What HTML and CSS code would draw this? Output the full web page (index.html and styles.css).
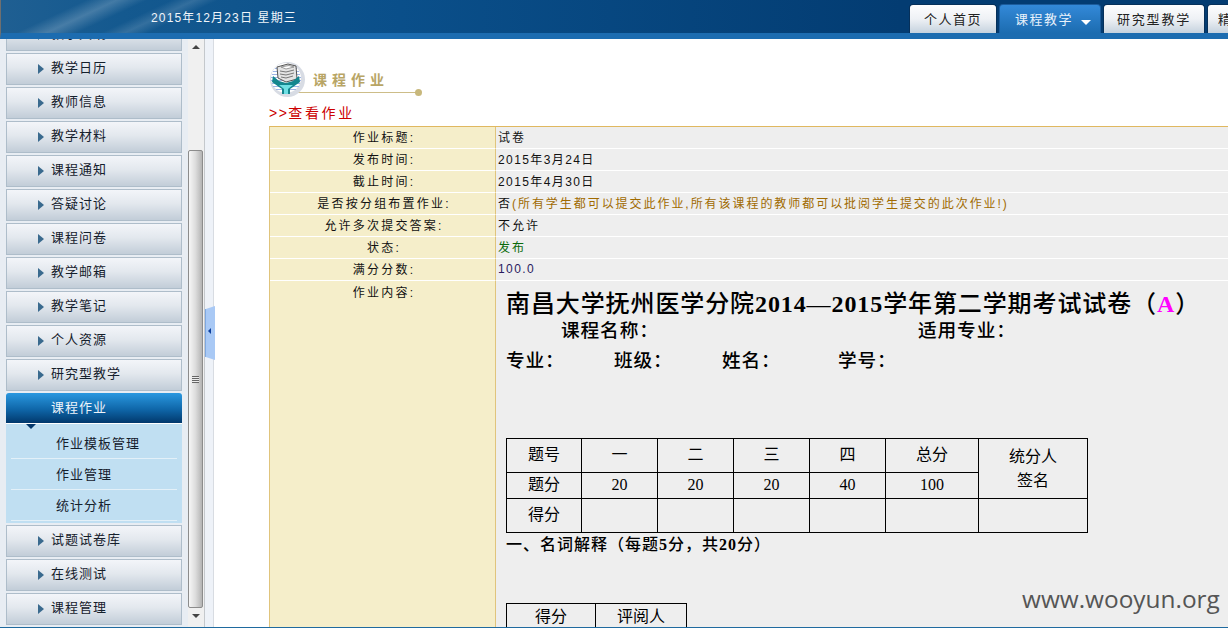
FILE: index.html
```html
<!DOCTYPE html>
<html lang="zh-CN">
<head>
  <meta charset="UTF-8">
  <title>课程作业</title>
  <link rel="stylesheet" href="styles.css">
</head>
<body>

  <!-- 顶部 -->
  <div class="top-bar">
    <div class="top-date">2015年12月23日 星期三</div>
    <div class="top-tabs">
      <div class="tab">个人首页</div>
      <div class="tab tab-active">课程教学<span class="tab-caret"></span></div>
      <div class="tab tab-wide">研究型教学</div>
      <div class="tab tab-cut">精品课程</div>
    </div>
  </div>

  <div class="page">
    <!-- 左侧菜单 -->
    <div class="side">
      <div class="menu">
        <div class="menu-item">教学大纲</div>
        <div class="menu-item">教学日历</div>
        <div class="menu-item">教师信息</div>
        <div class="menu-item">教学材料</div>
        <div class="menu-item">课程通知</div>
        <div class="menu-item">答疑讨论</div>
        <div class="menu-item">课程问卷</div>
        <div class="menu-item">教学邮箱</div>
        <div class="menu-item">教学笔记</div>
        <div class="menu-item">个人资源</div>
        <div class="menu-item">研究型教学</div>
        <div class="menu-item menu-active">课程作业</div>
        <div class="submenu">
          <div class="submenu-item">作业模板管理</div>
          <div class="submenu-item">作业管理</div>
          <div class="submenu-item">统计分析</div>
        </div>
        <div class="menu-item">试题试卷库</div>
        <div class="menu-item">在线测试</div>
        <div class="menu-item">课程管理</div>
      </div>
    </div>

    <div class="scrollbar">
      <span class="arrow-up"></span>
      <div class="thumb-track">
        <div class="thumb"><span class="grip"></span></div>
      </div>
      <span class="arrow-down"></span>
    </div>

    <div class="collapse-strip">
      <div class="collapse-handle"><span class="collapse-arrow"></span></div>
    </div>

    <!-- 内容 -->
    <div class="main">
      <div class="page-title">
        <svg class="title-icon" width="36" height="36" viewBox="0 0 36 36">
          <circle cx="17.5" cy="17.5" r="17.5" fill="#d8dce4"/>
          <circle cx="16" cy="16" r="15" fill="#fff"/>
          <g stroke="#9db4e6" stroke-width="1">
            <path d="M5 6.5h22M3 9.5h26M2 12.5h28M1 15.5h30M1 18.5h30M2 21.5h28M3 24.5h26M6 27.5h20"/>
          </g>
          <path d="M7 5l11-3 8 2 1 13-11 3-8-4z" fill="#e4e4e4" stroke="#555" stroke-width="1"/>
          <path d="M11 5l8-1.500 5 1.500-8 2z" fill="#fff" stroke="#777" stroke-width="0.700"/>
          <path d="M10 9l6 1 8-2M10 12l6 1 8-2M11 15l5 1 7-2" stroke="#777" stroke-width="1" fill="none"/>
          <path d="M3 14l6 5 7 2 7-2 6-5 1 6-7 5-3 2v5h-8v-5l-3-2-7-5z" fill="#14868e"/>
          <path d="M9 23h14l-5 4v5h-4v-5z" fill="#6fe0e4"/>
        </svg>
        <div class="title-text">课程作业</div>
        <span class="title-dot"></span>
      </div>
      <div class="sub-title"><span class="sub-mark">&gt;&gt;</span>查看作业</div>

      <table class="detail">
        <tr><th>作业标题:</th><td>试卷</td></tr>
        <tr><th>发布时间:</th><td class="num">2015年3月24日</td></tr>
        <tr><th>截止时间:</th><td class="num">2015年4月30日</td></tr>
        <tr><th>是否按分组布置作业:</th><td>否<span class="note">(所有学生都可以提交此作业,所有该课程的教师都可以批阅学生提交的此次作业!)</span></td></tr>
        <tr><th>允许多次提交答案:</th><td>不允许</td></tr>
        <tr><th>状态:</th><td class="status">发布</td></tr>
        <tr><th>满分分数:</th><td class="num score">100.0</td></tr>
        <tr>
          <th class="content-label">作业内容:</th>
          <td class="content-cell">
            <div class="exam-title">南昌大学抚州医学分院<b>2014</b>—<b>2015</b>学年第二学期考试试卷（<b class="exam-a">A</b>）</div>
            <div class="exam-line exam-line1">
              <span class="course-name">课程名称：</span>
              <span>适用专业：</span>
            </div>
            <div class="exam-line exam-line2">
              <span class="f-major">专业：</span>
              <span class="f-class">班级：</span>
              <span class="f-name">姓名：</span>
              <span>学号：</span>
            </div>

            <table class="score-table">
              <tr class="row-a">
                <td class="c1">题号</td><td class="c2">一</td><td class="c2">二</td><td class="c2">三</td><td class="c2">四</td><td class="c3">总分</td>
                <td class="c4" rowspan="2">统分人<br>签名</td>
              </tr>
              <tr class="row-b">
                <td>题分</td><td>20</td><td>20</td><td>20</td><td>40</td><td>100</td>
              </tr>
              <tr class="row-a">
                <td>得分</td><td></td><td></td><td></td><td></td><td></td><td></td>
              </tr>
            </table>

            <div class="section-title">一、名词解释（每题<b>5</b>分，共<b>20</b>分）</div>

            <table class="mark-table">
              <tr><td class="m1">得分</td><td class="m2">评阅人</td></tr>
            </table>
          </td>
        </tr>
      </table>
    </div>
  </div>

  <div class="bottom-line"></div>
  <div class="watermark">www.wooyun.org</div>

</body>
</html>
```

FILE: styles.css
```css
html, body {
  margin: 0;
  padding: 0;
  height: 100%;
  overflow: hidden;
}

body {
  font-family: "Liberation Sans", "Noto Sans CJK SC", sans-serif;
  font-size: 12px;
  color: #111;
  background-color: #fff;
}

/* 顶部 */
.top-bar {
  height: 33px;
  border-bottom: 6px solid #1c6cb0;
  border-left: 1px solid #6f6f6f;
  display: flex;
  justify-content: space-between;
  background:
    linear-gradient(155deg, transparent 36px, rgba(255, 255, 255, 0.2) 49px, transparent 62px, transparent 72px, rgba(255, 255, 255, 0.14) 82px, transparent 92px),
    linear-gradient(90deg, #1f5f92 0, #14598f 120px, #0a4f8a 400px, #033c72 900px);
}

.top-date {
  margin-left: 150px;
  line-height: 37px;
  font-size: 12px;
  letter-spacing: 1.15px;
  color: #f0f5fa;
}

.top-tabs {
  display: flex;
  gap: 2px;
  padding-top: 4px;
  width: 319px;
  overflow: hidden;
}

.tab {
  flex: none;
  width: 86px;
  height: 28px;
  line-height: 30px;
  text-align: center;
  font-size: 13px;
  letter-spacing: 1.5px;
  color: #222;
  background: linear-gradient(#fdfdfe, #eef1f5 50%, #c5d2de);
  border: 1px solid #06305a;
  border-bottom: none;
  border-radius: 4px 4px 0 0;
}

.tab-active {
  width: 94px;
  padding-left: 6px;
  color: #e8f2fb;
  background: linear-gradient(#3389d8, #1c6cb0);
  border-color: #1c5c9c;
}

.tab-wide {
  width: 100px;
  letter-spacing: 1.8px;
}

.tab-cut {
  width: 60px;
  text-align: left;
  padding-left: 10px;
}

.tab-caret {
  display: inline-block;
  margin-left: 8px;
  border-left: 5px solid transparent;
  border-right: 5px solid transparent;
  border-top: 5px solid #fff;
  vertical-align: -1px;
}

/* 页面 */
.page {
  display: flex;
  height: 588px;
  overflow: hidden;
}

.side {
  flex: none;
  width: 188px;
  background-color: #e8edf3;
  overflow: hidden;
}

.menu {
  margin-top: -20px;
  padding-left: 6px;
  width: 176px;
}

.menu-item {
  position: relative;
  box-sizing: border-box;
  height: 32px;
  margin-bottom: 2px;
  padding-left: 44px;
  line-height: 28px;
  font-size: 13px;
  letter-spacing: 1px;
  color: #15202c;
  background: linear-gradient(#f3f5f9, #e3e8ee 45%, #c2cdd8);
  border: 1px solid #aebdca;
}

.menu-item::before {
  content: "";
  position: absolute;
  left: 31px;
  top: 10px;
  border-top: 5px solid transparent;
  border-bottom: 5px solid transparent;
  border-left: 6px solid #3a6a8e;
}

.menu-active {
  height: 31px;
  margin-bottom: 0;
  border: none;
  border-bottom: 1px solid #fff;
  border-radius: 3px 3px 0 0;
  padding-left: 45px;
  line-height: 30px;
  color: #eef4fa;
  background: linear-gradient(#2a98e0, #0f66a8 55%, #01386c);
}

.menu-active::before {
  left: 20px;
  top: 31px;
  z-index: 1;
  border-left: 5px solid transparent;
  border-right: 5px solid transparent;
  border-top: 5px solid #04386c;
  border-bottom: none;
}

.submenu {
  height: 99px;
  margin-bottom: 2px;
  padding: 4px 5px 0;
  box-sizing: border-box;
  background-color: #c0dff2;
}

.submenu-item {
  height: 30px;
  padding-left: 45px;
  line-height: 31px;
  border-bottom: 1px solid #e3f0f8;
  font-size: 13px;
  letter-spacing: 1px;
  color: #15202c;
}

/* 滚动条 */
.scrollbar {
  flex: none;
  width: 16px;
  background-color: #f0f0f0;
  display: flex;
  flex-direction: column;
  align-items: center;
}

.arrow-up {
  margin-top: 6px;
  border-left: 4px solid transparent;
  border-right: 4px solid transparent;
  border-bottom: 4px solid #444;
}

.arrow-down {
  margin-top: 6px;
  border-left: 4px solid transparent;
  border-right: 4px solid transparent;
  border-top: 4px solid #444;
}

.thumb-track {
  flex: none;
  width: 100%;
  height: 559px;
  padding-top: 101px;
  box-sizing: border-box;
}

.thumb {
  box-sizing: border-box;
  width: 15px;
  height: 458px;
  padding-top: 225px;
  border: 1px solid #8c8c8c;
  border-radius: 2px;
  background: linear-gradient(90deg, #f6f6f6, #dcdcdc 50%, #b4b4b4);
}

.grip {
  display: block;
  width: 7px;
  height: 7px;
  margin: 0 auto;
  background: repeating-linear-gradient(#666 0, #666 1px, #ececec 1px, #ececec 2px);
}

.collapse-strip {
  flex: none;
  width: 10px;
  box-sizing: border-box;
  background-color: #eef2f8;
  border-left: 1px solid #c4c8cc;
  border-right: 1px solid #d8dce2;
  padding-top: 267px;
}

.collapse-handle {
  position: relative;
  width: 9px;
  height: 54px;
  background-color: #a9c9f5;
  border-left: 1px solid #7ea8e0;
  clip-path: polygon(0 6%, 100% 0, 100% 100%, 0 94%);
}

.collapse-arrow {
  position: absolute;
  left: 2px;
  top: 22px;
  border-top: 3px solid transparent;
  border-bottom: 3px solid transparent;
  border-right: 3px solid #0d3f9c;
}

/* 内容 */
.main {
  flex: 1;
  min-width: 0;
  padding-left: 55px;
  background-color: #fff;
  overflow: hidden;
}

.page-title {
  position: relative;
  height: 54px;
  margin-top: 23px;
  margin-left: 1px;
}

.title-icon {
  position: absolute;
  left: 0;
  top: 0;
}

.title-text {
  box-sizing: border-box;
  margin-left: 25px;
  width: 123px;
  height: 31px;
  padding-left: 18px;
  border-bottom: 1px solid #cdbd88;
  line-height: 37px;
  font-size: 14px;
  font-weight: bold;
  letter-spacing: 5px;
  color: #b8a565;
}

.title-dot {
  position: absolute;
  left: 145px;
  top: 27px;
  width: 7px;
  height: 7px;
  border-radius: 50%;
  background-color: #c8b87c;
}

.sub-title {
  height: 12px;
  margin-top: -12px;
  line-height: 19px;
  font-size: 14px;
  letter-spacing: 2.6px;
  color: #cc0000;
}

.sub-mark {
  letter-spacing: 1.5px;
}

.detail {
  width: 1000px;
  margin-top: 10px;
  border-collapse: separate;
  border-spacing: 0;
  border-top: 1px solid #e0b860;
  border-left: 1px solid #e0c47c;
  table-layout: fixed;
}

.detail th,
.detail td {
  height: 19px;
  padding: 0 0 2px;
  border-bottom: 1px solid #fff;
  font-size: 12px;
  font-weight: normal;
}

.detail th {
  width: 226px;
  background-color: #f5eeca;
  border-right: 1px solid #e0c47c;
  text-align: center;
  padding-left: 3px;
  box-sizing: border-box;
  height: 22px;
  letter-spacing: 2.2px;
  color: #111;
}

.detail td {
  padding-left: 2px;
  background-color: #eeeeee;
  color: #111;
  letter-spacing: 2px;
}

.detail .num {
  letter-spacing: 1.4px;
}

.note {
  color: #a06a00;
  letter-spacing: 1.95px;
}

.detail .status {
  color: #0a6a0a;
}

.detail .score {
  color: #2a1a5e;
}

.detail .content-label {
  vertical-align: top;
  padding-top: 2px;
  border-bottom: none;
}

.detail .content-cell {
  vertical-align: top;
  padding: 9px 0 0 10px;
  height: 400px;
  border-bottom: none;
  font-family: "Liberation Serif", "Noto Sans CJK SC", serif;
  color: #000;
  letter-spacing: 0.9px;
}

.exam-title {
  height: 30px;
  line-height: 28px;
  font-size: 24px;
  font-weight: 500;
  white-space: nowrap;
}

.detail .exam-a {
  color: #ff00ff;
}

.exam-line {
  display: flex;
  font-size: 18.67px;
  font-weight: 500;
}

.exam-line1 {
  height: 22px;
  line-height: 22px;
  padding-left: 55px;
}

.exam-line2 {
  height: 38px;
  line-height: 38px;
}

.course-name {
  width: 357px;
}

.f-major,
.f-class {
  width: 108px;
}

.f-name {
  width: 116px;
}

.score-table {
  margin-top: 58px;
  border-collapse: collapse;
  border: 1px solid #000;
  table-layout: fixed;
  width: 582px;
}

.score-table td {
  padding: 0 0 1px;
  border: 1px solid #000;
  background-color: transparent;
  text-align: center;
  font-size: 16px;
  line-height: 20px;
  letter-spacing: 0;
  color: #000;
}

.score-table .row-a td {
  height: 32px;
}

.score-table .row-b td {
  height: 24px;
}

.score-table .c1 {
  width: 74px;
}

.score-table .c2 {
  width: 75px;
}

.score-table .c3 {
  width: 92px;
}

.score-table .c4 {
  vertical-align: top;
  line-height: 24px;
  padding: 6px 0 0;
}

.section-title {
  height: 24px;
  line-height: 24px;
  font-size: 16px;
  font-weight: 500;
  letter-spacing: 1px;
}

.mark-table {
  margin-top: 46px;
  border-collapse: collapse;
  border: 1px solid #000;
  table-layout: fixed;
  width: 181px;
}

.mark-table td {
  height: 30px;
  padding: 0;
  border: 1px solid #000;
  background-color: transparent;
  vertical-align: top;
  line-height: 26px;
  text-align: center;
  font-size: 16px;
  letter-spacing: 0;
  color: #000;
}

.mark-table .m1 {
  width: 88px;
}

.bottom-line {
  position: relative;
  height: 1px;
  background-color: #1f6a9f;
}

.watermark {
  position: absolute;
  left: 1022px;
  top: 584px;
  font-family: "Open Sans", sans-serif;
  font-size: 24.4px;
  line-height: 30px;
  color: #555;
  white-space: nowrap;
}
```
